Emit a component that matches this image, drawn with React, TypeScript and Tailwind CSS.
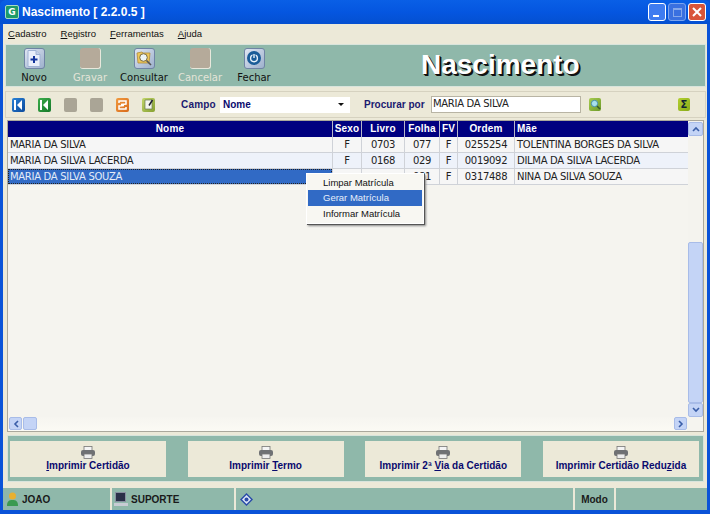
import React from 'react';

const dejavu = { fontFamily: '"DejaVu Sans", Verdana, sans-serif' };
const arial = { fontFamily: '"Liberation Sans", Arial, sans-serif' };

const rows = [
  { nome: 'MARIA DA SILVA', sexo: 'F', livro: '0703', folha: '077', fv: 'F', ordem: '0255254', mae: 'TOLENTINA BORGES DA SILVA' },
  { nome: 'MARIA DA SILVA LACERDA', sexo: 'F', livro: '0168', folha: '029', fv: 'F', ordem: '0019092', mae: 'DILMA DA SILVA LACERDA' },
  // sexo and livro of this row are hidden behind the context menu
  { nome: 'MARIA DA SILVA SOUZA', sexo: '', livro: '', folha: '081', fv: 'F', ordem: '0317488', mae: 'NINA DA SILVA SOUZA' },
];

const cols = 'grid grid-cols-[324px_28px_42px_34px_17px_56px_174px] gap-x-px';
const scrollBtn = 'bg-[#c4d4f6] border border-[#a8bce8] rounded-[2px] flex items-center justify-center shrink-0';

function ToolButton({ label, disabled, children, w }: { label: string; disabled?: boolean; children?: React.ReactNode; w: string }) {
  return (
    <div className={`flex flex-col items-center ${w}`}>
      <div className={`w-[21px] h-[21px] rounded-[3px] flex items-center justify-center ${disabled ? 'bg-[#b5aa9a] border-r border-b border-[#e8e8dc]' : 'bg-gradient-to-br from-[#dfe6f2] to-[#9db0cc] border border-[#6f84a4]'}`}>
        {children}
      </div>
      <span className={`text-[10px] leading-[12px] mt-[3px] ${disabled ? 'text-[#e4e4d8]' : 'text-[#111]'}`}>{label}</span>
    </div>
  );
}

function NavIcon({ bg, children }: { bg: string; children?: React.ReactNode }) {
  return <div className={`w-[13px] h-[14px] rounded-[2px] flex items-center justify-center ${bg}`}>{children}</div>;
}

function PrintButton({ children }: { children: React.ReactNode }) {
  return (
    <div className="w-[156px] h-[36px] bg-[#ece9d8] flex flex-col items-center justify-center">
      <svg width="16" height="13" viewBox="0 0 16 13">
        <rect x="4" y="0.5" width="8" height="5" fill="#f4f4f4" stroke="#777" strokeWidth="0.8" />
        <rect x="1" y="4" width="14" height="6" rx="2" fill="#6f7174" />
        <rect x="4" y="8" width="8" height="4.5" fill="#eee" stroke="#777" strokeWidth="0.8" />
      </svg>
      <span className="text-[10px] leading-[13px] font-bold text-[#0a0a6e]" style={arial}>{children}</span>
    </div>
  );
}

export default function App() {
  return (
    <div className="w-[710px] h-[514px] overflow-hidden bg-[#0a53d8] relative" style={dejavu}>
      {/* Title bar */}
      <div className="h-[24px] bg-gradient-to-b from-[#0a5fe6] via-[#0556e0] to-[#0450d0] flex items-center pl-[5px] pr-[4px] rounded-t-[6px]">
        <div className="w-[14px] h-[14px] bg-[#1d9a6a] border border-[#a8dcc4] rounded-[2px] text-white text-[9px] leading-[12px] font-bold text-center">G</div>
        <span className="ml-[3px] text-white text-[12px] font-bold" style={arial}>Nascimento [ 2.2.0.5 ]</span>
        <div className="ml-auto flex gap-[2px]">
          <div className="w-[18px] h-[18px] rounded-[3px] bg-[#3f7cf0] border border-white flex items-end pl-[4px] pb-[3px]"><div className="w-[6px] h-[2px] bg-white" /></div>
          <div className="w-[18px] h-[18px] rounded-[3px] bg-[#3a70e0] border border-[#7ba4ee] flex items-center justify-center"><div className="w-[9px] h-[9px] border border-[#86a8ea] border-t-2" /></div>
          <div className="w-[18px] h-[18px] rounded-[3px] bg-[#d9553a] border border-white flex items-center justify-center">
            <svg width="10" height="10" viewBox="0 0 10 10"><path d="M1 1l8 8M9 1l-8 8" stroke="#fff" strokeWidth="2" /></svg>
          </div>
        </div>
      </div>

      {/* Window body */}
      <div className="mx-[3px] h-[486px] bg-[#ece9d8] flex flex-col">
        {/* Menu */}
        <div className="h-[20px] shrink-0 flex items-center pl-[5px] gap-[14px] text-[9.5px] text-[#111]" style={arial}>
          <span><u>C</u>adastro</span>
          <span><u>R</u>egistro</span>
          <span><u>F</u>erramentas</span>
          <span><u>A</u>juda</span>
        </div>

        {/* Toolbar */}
        <div className="h-[43px] bg-[#8fb8aa] ml-[2px] mr-[1px] border border-[#d8e4dc] flex items-center relative shrink-0">
          <ToolButton label="Novo" w="w-[50px] ml-[3px]">
            <svg width="14" height="17" viewBox="0 0 14 17"><path d="M1 .5h8l4 4v12H1z" fill="#e8eefa" stroke="#9fb2d4" /><path d="M9 .5v4h4" fill="#c4d0e8" stroke="#9fb2d4" /><path d="M7 6v7M3.5 9.5h7" stroke="#12349c" strokeWidth="2" /></svg>
          </ToolButton>
          <ToolButton label="Gravar" disabled w="w-[44px] ml-[9px]" />
          <ToolButton label="Consultar" w="w-[54px] ml-[5px]">
            <svg width="17" height="17" viewBox="0 0 17 17"><path d="M1 3l5-1 1 1h7l-1 10H2z" fill="#eec85a" stroke="#b08a3a" strokeWidth="0.8" /><circle cx="7.5" cy="7.5" r="3.8" fill="#eef4f6" stroke="#7a6a40" /><path d="M10.5 10.5l4.5 4.5" stroke="#555" strokeWidth="1.6" /></svg>
          </ToolButton>
          <ToolButton label="Cancelar" disabled w="w-[50px] ml-[4px]" />
          <ToolButton label="Fechar" w="w-[50px] ml-[4px]">
            <svg width="16" height="16" viewBox="0 0 16 16"><circle cx="8" cy="8" r="7" fill="#1a5c98" /><circle cx="8" cy="8.3" r="3.4" fill="none" stroke="#e8f2fa" strokeWidth="1.4" /><path d="M8 3.6v4.4" stroke="#1a5c98" strokeWidth="3" /><path d="M8 4v4" stroke="#e8f2fa" strokeWidth="1.4" /></svg>
          </ToolButton>
          <span className="absolute left-[415px] top-[4px] text-white text-[28px] leading-[32px] font-bold" style={{ ...arial, textShadow: '1px 1px 0 #111, 2px 2px 0 #111' }}>Nascimento</span>
        </div>

        {/* Search bar */}
        <div className="h-[27px] mt-[4px] ml-[2px] mr-[1px] border border-[#d6d2c0] flex items-center shrink-0 pl-[6px]">
          <div className="flex gap-[13px] shrink-0">
            <NavIcon bg="bg-gradient-to-br from-[#2a82d8] to-[#0c4a9c]">
              <svg width="9" height="10" viewBox="0 0 9 10"><path d="M0 0h2v10H0zM8 0v10L3 5z" fill="#fff" /></svg>
            </NavIcon>
            <NavIcon bg="bg-gradient-to-br from-[#3cae4c] to-[#14782a]">
              <svg width="9" height="10" viewBox="0 0 9 10"><path d="M0 0h2v10H0zM8 0v10L3 5z" fill="#fff" /></svg>
            </NavIcon>
            <NavIcon bg="bg-[#aaa596]" />
            <NavIcon bg="bg-[#aaa596]" />
            <NavIcon bg="bg-gradient-to-br from-[#f09a40] to-[#d86a18]">
              <svg width="9" height="10" viewBox="0 0 9 10"><path d="M1 3V1h7v3L3 4.5M8 7v2H1V6l5-.5" fill="none" stroke="#fff" strokeWidth="1.5" /></svg>
            </NavIcon>
            <NavIcon bg="bg-gradient-to-br from-[#c2d66a] to-[#86a030]">
              <svg width="10" height="11" viewBox="0 0 10 11"><path d="M1 1h7v9H1z" fill="#f4f6ee" stroke="#6a7a50" strokeWidth="0.7" /><path d="M8.5 1L5 6.5" stroke="#223" strokeWidth="1.5" /></svg>
            </NavIcon>
          </div>
          <span className="ml-[26px] w-[39px] shrink-0 text-[10px] font-bold tracking-[0.2px] text-[#1a1a70]" style={arial}>Campo</span>
          <div className="w-[130px] h-[16px] shrink-0 bg-white flex items-center pl-[3px] text-[10px] font-bold text-[#0a0a6e]" style={arial}>
            Nome
            <span className="ml-auto mr-[6px] w-0 h-0 border-x-[3px] border-x-transparent border-t-[3px] border-t-[#111]" />
          </div>
          <span className="ml-[14px] w-[67px] shrink-0 whitespace-nowrap text-[10px] font-bold text-[#1a1a70]" style={arial}>Procurar por</span>
          <div className="w-[150px] h-[17px] shrink-0 bg-white border border-[#b8b4a4] pl-[1px] text-[10px] leading-[14px] tracking-[-0.3px] text-[#222]">MARIA DA SILVA</div>
          <div className="ml-[8px] w-[12px] h-[13px] shrink-0 rounded-[2px] bg-gradient-to-br from-[#a8cc50] to-[#6c9a28] flex items-center justify-center">
            <svg width="11" height="11" viewBox="0 0 11 11"><circle cx="4.5" cy="4.5" r="3.2" fill="#a8e0ec" stroke="#4a90a8" /><path d="M7 7l3 3" stroke="#3a5a2a" strokeWidth="1.5" /></svg>
          </div>
          <div className="ml-[77px] w-[12px] h-[13px] shrink-0 rounded-[2px] bg-gradient-to-br from-[#b4d030] to-[#88aa18] text-[#123] text-[10px] leading-[13px] font-bold text-center">Σ</div>
        </div>

        {/* Grid */}
        <div className="mt-[2px] ml-[4px] mr-[3px] h-[312px] shrink-0 bg-[#f5f4ef] border border-[#aaa89c] relative flex">
          <div className="w-[680px] flex flex-col">
            <div className={`${cols} bg-[#b8b8c8] shrink-0 h-[16px]`} style={arial}>
              {['Nome', 'Sexo', 'Livro', 'Folha', 'FV', 'Ordem'].map((h) => (
                <div key={h} className="bg-[#000080] text-white text-[10px] leading-[15px] font-bold tracking-[0.2px] text-center">{h}</div>
              ))}
              <div className="bg-[#000080] text-white text-[10px] leading-[15px] font-bold tracking-[0.2px] pl-[2px]">Mãe</div>
            </div>
            {rows.map((r, i) => {
              const bg = i === 1 ? 'bg-[#eef2fa]' : 'bg-[#f6f6f6]';
              return (
                <div key={r.ordem} className={`${cols} h-[16px] text-[10px] leading-[15px] tracking-[-0.3px] bg-[#cfd2d8] pb-px text-[#222]`}>
                  <div className={i === 2 ? 'pl-[1px] bg-[#316ac5] text-[#e4ecf8] border border-dotted border-[#222] leading-[13px]' : `pl-[2px] ${bg}`}>{r.nome}</div>
                  <div className={`text-center ${bg}`}>{r.sexo}</div>
                  <div className={`text-center ${bg}`}>{r.livro}</div>
                  <div className={`text-center ${bg}`}>{r.folha}</div>
                  <div className={`text-center ${bg}`}>{r.fv}</div>
                  <div className={`text-center ${bg}`}>{r.ordem}</div>
                  <div className={`pl-[2px] ${bg}`}>{r.mae}</div>
                </div>
              );
            })}
          </div>

          {/* Vertical scrollbar */}
          <div className="w-[15px] flex flex-col bg-[#f4f3ee] ml-auto mb-[14px] pt-px">
            <div className={`h-[14px] ${scrollBtn}`}>
              <svg width="8" height="6" viewBox="0 0 8 6"><path d="M1 5l3-3 3 3" fill="none" stroke="#3a5ea8" strokeWidth="1.6" /></svg>
            </div>
            <div className="h-[106px]" />
            <div className="flex-1 bg-[#c4d4f6] border border-[#a8bce8] rounded-[2px]" />
            <div className={`h-[14px] ${scrollBtn}`}>
              <svg width="8" height="6" viewBox="0 0 8 6"><path d="M1 1l3 3 3-3" fill="none" stroke="#3a5ea8" strokeWidth="1.6" /></svg>
            </div>
          </div>

          {/* Horizontal scrollbar */}
          <div className="absolute left-[1px] bottom-0 w-[678px] h-[14px] bg-gradient-to-b from-[#f6f5f0] to-[#fbfaf4] flex">
            <div className={`w-[13px] h-[13px] ${scrollBtn}`}>
              <svg width="6" height="8" viewBox="0 0 6 8"><path d="M5 1L2 4l3 3" fill="none" stroke="#3a5ea8" strokeWidth="1.6" /></svg>
            </div>
            <div className={`w-[14px] h-[13px] ml-px ${scrollBtn}`} />
            <div className={`ml-auto w-[13px] h-[13px] ${scrollBtn}`}>
              <svg width="6" height="8" viewBox="0 0 6 8"><path d="M1 1l3 3-3 3" fill="none" stroke="#3a5ea8" strokeWidth="1.6" /></svg>
            </div>
          </div>
        </div>

        {/* Print buttons */}
        <div className="mt-[3px] ml-[4px] mr-[3px] h-[47px] bg-[#8fb8aa] border border-[#d8e4dc] shrink-0 flex items-center justify-between pl-[2px] pr-[4px]">
          <PrintButton><u>I</u>mprimir Certidão</PrintButton>
          <PrintButton>Imprimir <u>T</u>ermo</PrintButton>
          <PrintButton>Imprimir 2ª <u>V</u>ia da Certidão</PrintButton>
          <PrintButton>Imprimir Certidão Redu<u>z</u>ida</PrintButton>
        </div>

        {/* Status bar */}
        <div className="mt-[6px] h-[22px] flex gap-[2px] text-[10px] font-bold shrink-0 text-[#1a1a1a]" style={arial}>
          <div className="w-[107px] bg-[#8fb8aa] flex items-center pl-[4px] gap-[4px]">
            <svg width="11" height="14" viewBox="0 0 11 14"><circle cx="5.5" cy="4" r="3.5" fill="#e8b030" /><path d="M0 14c0-5 2-6 5.5-6s5.5 1 5.5 6z" fill="#3a9a50" /></svg>
            JOAO
          </div>
          <div className="w-[122px] bg-[#8fb8aa] flex items-center pl-[2px] gap-[3px]">
            <svg width="14" height="15" viewBox="0 0 14 15"><rect x="1.5" y="0.5" width="10" height="9" fill="#2a3048" stroke="#8890a0" /><rect x="0" y="11" width="14" height="3" fill="#c8ccd4" /></svg>
            SUPORTE
          </div>
          <div className="w-[337px] bg-[#8fb8aa] flex items-center pl-[4px]">
            <svg width="13" height="13" viewBox="0 0 13 13"><path d="M6.5 0L13 6.5 6.5 13 0 6.5z" fill="#2a4aa8" /><path d="M6.5 2L11 6.5 6.5 11 2 6.5z" fill="#dfe8f8" /><circle cx="6.5" cy="6.5" r="2" fill="#2a4aa8" /></svg>
          </div>
          <div className="w-[39px] bg-[#8fb8aa] flex items-center justify-center">Modo</div>
          <div className="flex-1 bg-[#8fb8aa]" />
        </div>
      </div>

      {/* Context menu */}
      <div className="absolute left-[306px] top-[173px] w-[118px] h-[51px] bg-[#f8f7f2] border border-[#fff] p-[1px] shadow-[1px_1px_0_#555,2px_2px_2px_#888] text-[9.5px] leading-[15px] text-[#111]" style={arial}>
        <div className="h-[15px] pl-[15px]">Limpar Matrícula</div>
        <div className="h-[16px] pl-[15px] bg-[#316ac5] text-[#e6eefa]">Gerar Matrícula</div>
        <div className="h-[15px] pl-[15px]">Informar Matrícula</div>
      </div>
    </div>
  );
}
